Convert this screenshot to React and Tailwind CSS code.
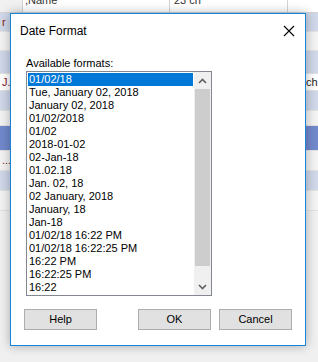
import React from 'react';

const formats = [
    '01/02/18',
    'Tue, January 02, 2018',
    'January 02, 2018',
    '01/02/2018',
    '01/02',
    '2018-01-02',
    '02-Jan-18',
    '01.02.18',
    'Jan. 02, 18',
    '02 January, 2018',
    'January, 18',
    'Jan-18',
    '01/02/18 16:22 PM',
    '01/02/18 16:22:25 PM',
    '16:22 PM',
    '16:22:25 PM',
    '16:22',
];

// rows of the grid that sits behind the dialog
const bgRows = [
    { h: 'h-[19px]', bg: 'bg-[#cfd7e8]', left: 'r' },
    { h: 'h-[19px]', bg: 'bg-[#f3f3f3]' },
    { h: 'h-[23px]', bg: 'bg-[#cfd7e8]' },
    { h: 'h-[17px]', bg: 'bg-white', left: 'J.', right: 'ch' },
    { h: 'h-[20px]', bg: 'bg-[#cfd7e8]' },
    { h: 'h-[15px]', bg: 'bg-[#f3f3f3]' },
    { h: 'h-[25px]', bg: 'bg-[#7189cc]' },
    { h: 'h-[20px]', bg: 'bg-[#f3f3f3]', left: '...' },
    { h: 'h-[20px]', bg: 'bg-[#cfd7e8]' },
    { h: 'h-[20px]', bg: 'bg-[#f3f3f3]' },
];

const Button = ({ children }) => (
    <button className="w-[73px] h-[21px] bg-[#e1e1e1] border border-[#adadad] text-[11px] text-black leading-none">
        {children}
    </button>
);

export default function App() {
    return (
        <div className="relative w-[318px] h-[362px] overflow-hidden bg-[#f0f0f0] font-['Liberation_Sans',Arial,sans-serif]">
            {/* background grid */}
            <div className="flex flex-col">
                <div className="flex h-[13px] bg-white border-b border-[#d4d4d4] text-[11px] leading-none">
                    <div className="w-[23px] bg-[#f0f0f0] border-r border-[#d4d4d4]" />
                    <div className="w-[147px] border-r border-[#d4d4d4] pl-[2px] -mt-[5px] text-[#333]">,Name</div>
                    <div className="w-[118px] border-r border-[#d4d4d4] pl-[4px] -mt-[5px] text-[#333]">23 ch</div>
                    <div className="flex-1" />
                </div>
                {bgRows.map((r, i) => (
                    <div key={i} className={`flex ${r.h} ${r.bg} border-b border-[#e2e2e2] text-[11px] leading-none items-center`}>
                        <div className="w-[23px] pl-[2px] text-[#8b1a1a]">{r.left}</div>
                        <div className="flex-1" />
                        <div className="w-[12px] text-[#222] overflow-hidden">{r.right}</div>
                    </div>
                ))}
            </div>

            {/* dialog */}
            <div className="absolute left-[10px] top-[13px] w-[296px] h-[333px] bg-white border border-[#1883d7] shadow-[0_0_10px_rgba(0,0,0,0.3)] flex flex-col">
                <div className="flex items-center justify-between h-[34px] pl-[9px] pr-[9px]">
                    <span className="text-[12px] text-black">Date Format</span>
                    <svg width="12" height="12" viewBox="0 0 12 12" className="mr-[1px]">
                        <path d="M1 1L11 11M11 1L1 11" stroke="#000" strokeWidth="1.1" fill="none" />
                    </svg>
                </div>
                <div className="pl-[15px] pt-[9px] text-[11px] leading-[13px] text-black">Available formats:</div>
                <div className="ml-[15px] mt-[1px] w-[186px] h-[225px] border border-[#828790] flex">
                    <div className="flex-1 p-[1px] flex flex-col">
                        {formats.map((f, i) => (
                            <div
                                key={f}
                                className={`h-[13px] pl-[1px] text-[11px] leading-[13px] whitespace-nowrap ${i === 0 ? 'bg-[#0078d7] text-white' : 'text-black'}`}
                            >
                                {f}
                            </div>
                        ))}
                    </div>
                    <div className="w-[17px] bg-[#f0f0f0] flex flex-col">
                        <div className="h-[17px] flex items-center justify-center">
                            <svg width="9" height="6" viewBox="0 0 9 6">
                                <path d="M1 5L4.5 1.5L8 5" stroke="#606060" strokeWidth="1.6" fill="none" />
                            </svg>
                        </div>
                        <div className="h-[177px] mx-[1px] bg-[#cdcdcd]" />
                        <div className="flex-1" />
                        <div className="h-[17px] flex items-center justify-center">
                            <svg width="9" height="6" viewBox="0 0 9 6">
                                <path d="M1 1L4.5 4.5L8 1" stroke="#606060" strokeWidth="1.6" fill="none" />
                            </svg>
                        </div>
                    </div>
                </div>
                <div className="flex mt-[13px] px-[13px]">
                    <Button>Help</Button>
                    <div className="flex-1" />
                    <div className="flex gap-[8px]">
                        <Button>OK</Button>
                        <Button>Cancel</Button>
                    </div>
                </div>
            </div>
        </div>
    );
}
